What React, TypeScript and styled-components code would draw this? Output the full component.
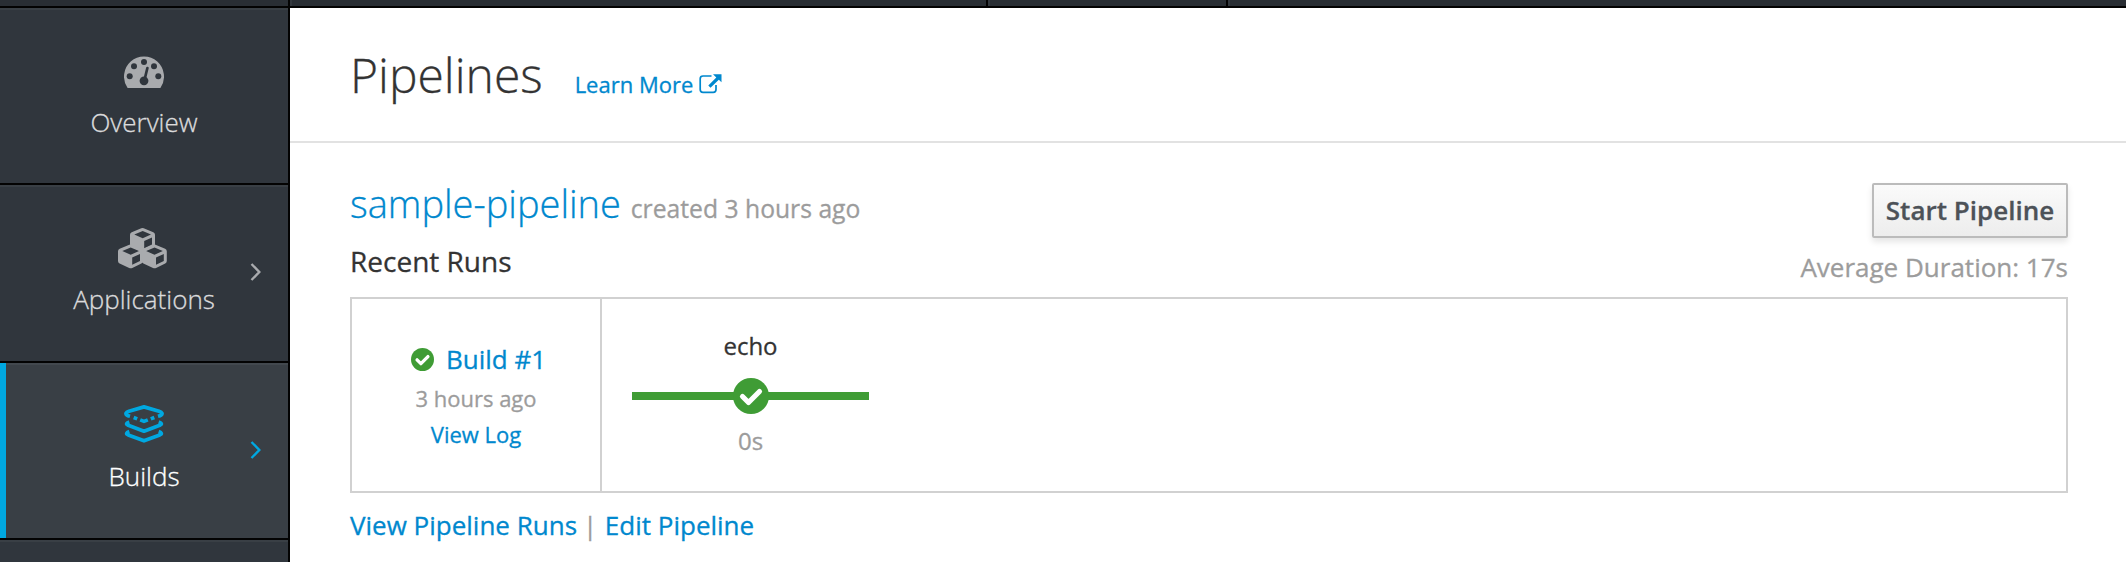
import React from "react";
import styled, { createGlobalStyle } from "styled-components";

const Global = createGlobalStyle`
  * { box-sizing: border-box; }
  body { margin: 0; background: #fff; overflow: hidden; font-family: "Open Sans", "Liberation Sans", sans-serif; color: #333; -webkit-text-stroke: 0.3px; }
  h1, h2, h3, p { margin: 0; font-weight: 400; }
  a { color: #0088ce; text-decoration: none; }
  svg { display: block; flex: none; }
`;

const Page = styled.div`
  height: 562px;
  display: flex;
  flex-direction: column;
  overflow: hidden;
`;

const TopBar = styled.header`
  height: 8px;
  flex: none;
  display: flex;
  background: #292e34;
  border-bottom: 2px solid #030303;
`;

const TopCell = styled.div<{ $w?: number }>`
  ${(p) => (p.$w ? `width: ${p.$w}px; flex: none;` : "flex: 1;")}
  border-right: ${(p) => (p.$w ? "2px solid #030303" : "0")};
  border-left: 2px solid #33383e;

  &:first-child {
    border-left: 0;
  }
`;

const Body = styled.div`
  flex: 1;
  display: flex;
  min-height: 0;
`;

const Sidebar = styled.nav`
  width: 290px;
  flex: none;
  border-right: 2px solid #030303;
  background: #30363d;
`;

const NavItem = styled.a<{ $active?: boolean; $h: number }>`
  height: ${(p) => p.$h}px;
  padding-bottom: 2px;
  display: grid;
  grid-template-columns: 64px 160px 64px;
  align-items: center;
  background: ${(p) => (p.$active ? "#393f45" : "#30363d")};
  border-bottom: 2px solid #030303;
  box-shadow: ${(p) => (p.$active ? "inset 6px 0 0 #00a8e1, " : "")}inset 0 2px 0 ${(p) => (p.$active ? "#42484e" : "#393f45")};
  color: ${(p) => (p.$active ? "#00a8e1" : "#a9abae")};
`;

const NavContent = styled.div<{ $pad: number }>`
  grid-column: 2;
  align-self: start;
  display: flex;
  flex-direction: column;
  align-items: center;
  padding-top: ${(p) => p.$pad}px;
`;

const NavIcon = styled.div`
  height: 44px;
  display: flex;
  align-items: center;
`;

const NavLabel = styled.span<{ $active?: boolean }>`
  margin-top: 8px;
  font-size: 26px;
  line-height: 40px;
  font-weight: 300;
  color: ${(p) => (p.$active ? "#fff" : "#dbdbdc")};
`;

const Arrow = styled.span`
  margin-left: 26px;
`;

const Main = styled.main`
  flex: 1;
  min-width: 0;
`;

const PageHeader = styled.div`
  height: 135px;
  padding: 34px 60px 0;
  display: flex;
  align-items: baseline;
  border-bottom: 2px solid #e2e2e2;
`;

const Title = styled.h1`
  font-size: 48px;
  line-height: 66px;
  font-weight: 300;
`;

const LearnMore = styled.a`
  margin-left: 32px;
  display: flex;
  align-items: center;
  gap: 6px;
  font-size: 22px;
  line-height: 30px;
`;

const Content = styled.section`
  padding: 40px 58px 0 60px;
`;

const Summary = styled.div`
  height: 114px;
  display: flex;
  justify-content: space-between;
`;

const Name = styled.h2`
  font-size: 38px;
  line-height: 40px;
  font-weight: 300;
`;

const Created = styled.small`
  font-size: 24.7px;
  line-height: 1;
  font-weight: 400;
  color: #9c9c9c;
`;

const SubTitle = styled.h3`
  margin-top: 18px;
  font-size: 28px;
  line-height: 40px;
`;

const Actions = styled.div`
  display: flex;
  flex-direction: column;
  align-items: flex-end;
`;

const StartButton = styled.button`
  width: 196px;
  height: 55px;
  padding: 0 0 1px;
  border: 2px solid #bbb;
  border-radius: 2px;
  background: linear-gradient(#fafafa, #ededed);
  box-shadow: 0 4px 6px rgba(3, 3, 3, 0.1);
  color: #4d5258;
  font: 600 26px/36px "Open Sans", "Liberation Sans", sans-serif;
`;

const Duration = styled.p`
  margin-top: 11px;
  font-size: 26px;
  line-height: 36px;
  color: #9c9c9c;
`;

const RunBox = styled.div`
  height: 196px;
  display: flex;
  border: 2px solid #d1d1d1;
`;

const BuildCell = styled.div`
  width: 250px;
  border-right: 2px solid #d1d1d1;
  padding-top: 40px;
  display: flex;
  flex-direction: column;
  align-items: center;
`;

const BuildName = styled.div`
  margin-bottom: 1px;
  padding-left: 5px;
  display: flex;
  align-items: center;
  gap: 12px;
  font-size: 26px;
  line-height: 40px;
`;

const BuildLine = styled.div`
  font-size: 22px;
  line-height: 36px;
  color: #9c9c9c;
`;

const Stage = styled.div`
  margin-left: 30px;
  width: 237px;
  padding-top: 29px;
  display: flex;
  flex-direction: column;
  align-items: center;
  font-size: 24px;
  line-height: 35px;
`;

const StageTrack = styled.div`
  width: 100%;
  height: 36px;
  margin: 15px 0 9px;
  display: flex;
  align-items: center;
  justify-content: center;
  background: linear-gradient(#3f9c35, #3f9c35) center 14px / 100% 8px no-repeat;
`;

const StageTime = styled.div`
  color: #9c9c9c;
`;

const Links = styled.div`
  margin-top: 14px;
  font-size: 26px;
  line-height: 36px;
  color: #9c9c9c;
`;

const Divider = styled.span`
  margin: 0 7.5px 0 6px;
`;

const GaugeIcon = () => (
  <svg width="40" height="32" viewBox="0 0 40 32">
    <path fill="currentColor" d="M3.6 32A20 20 0 1 1 36.4 32Z" />
    <g fill="#30363d">
      <circle cx="5.7" cy="20.3" r="3" />
      <circle cx="10" cy="10.3" r="3" />
      <circle cx="20" cy="6" r="3" />
      <circle cx="30" cy="10.3" r="3" />
      <circle cx="34.3" cy="20.3" r="3" />
      <circle cx="20" cy="24.8" r="4.4" />
    </g>
    <path d="M20.6 23.5 23.4 12" stroke="#30363d" strokeWidth="2.7" strokeLinecap="round" />
  </svg>
);

const Cube = ({ x, y }: { x: number; y: number }) => (
  <g transform={`translate(${x} ${y})`}>
    <path
      fill="currentColor"
      fillRule="evenodd"
      d="M11.3.3Q12.5-.2 13.7.3L23.3 4.2Q25 5 25 6.8V16.4Q25 18 23.4 18.9L14.3 23.4Q12.8 24.1 11.2 23.4L1.6 18.9Q0 18 0 16.4V6.8Q0 5 1.7 4.2ZM4.3 6.6 12.7 10.2 21 6.6 12.7 3.1ZM14.2 13V20.2L22 16.4V9.6Z"
    />
  </g>
);

const CubesIcon = () => (
  <svg width="52" height="42" viewBox="0 0 52 42">
    <Cube x={12} y={0} />
    <Cube x={0} y={16.5} />
    <Cube x={23.8} y={16.5} />
  </svg>
);

const LayersIcon = () => (
  <svg width="40" height="42" viewBox="0 0 40 42" fill="none" stroke="currentColor" strokeWidth="3.7" strokeLinejoin="round">
    <path d="M6 11.300Q1.500 10 2 8.300Q2.500 7.200 5 6.300L20 1.900L35 6.300Q37.500 7.200 38 8.300Q38.500 10 34 11.300" />
    <path d="M9.700 12.500 13.200 13.900M16.200 14.900 20 16.400 23.800 14.900M26.800 13.900 30.300 12.500" />
    <path d="M5.300 17Q.600 18.700 4.200 20.300L20 26.200L35.800 20.300Q39.400 18.700 34.700 17" />
    <path d="M5.300 26.600Q.600 28.300 4.200 29.900L20 35.800L35.800 29.900Q39.400 28.300 34.700 26.600" />
  </svg>
);

const Chevron = () => (
  <svg width="12" height="18" viewBox="0 0 12 18" fill="none" stroke="currentColor" strokeWidth="2.4">
    <path d="M1.500 1 9.300 9 1.500 17" />
  </svg>
);

const ExternalIcon = () => (
  <svg width="23" height="20" viewBox="0 0 23 20">
    <path d="M12.500 2H4Q1.200 2 1.200 4.800V15.600Q1.200 18.400 4 18.400H14.200Q17 18.400 17 15.600V11" fill="none" stroke="currentColor" strokeWidth="1.700" />
    <path d="M14 .2H22.500V8.300L19.800 5.700 11.500 13.800 9.300 11.600 17.300 3.400Z" fill="currentColor" />
  </svg>
);

const CheckIcon = ({ size }: { size: number }) => (
  <svg width={size} height={size} viewBox="0 0 36 36">
    <circle cx="18" cy="18" r="18" fill="#3f9c35" />
    <path d="M9.500 18.500 15.500 24.500 26.500 13.500" fill="none" stroke="#fff" strokeWidth="5.200" strokeLinejoin="round" strokeLinecap="round" />
  </svg>
);

export default function App() {
  return (
    <Page>
      <Global />
      <TopBar>
        <TopCell $w={290} />
        <TopCell $w={698} />
        <TopCell $w={240} />
        <TopCell />
      </TopBar>
      <Body>
        <Sidebar>
          <NavItem $h={177}>
            <NavContent $pad={42}>
              <NavIcon><GaugeIcon /></NavIcon>
              <NavLabel>Overview</NavLabel>
            </NavContent>
          </NavItem>
          <NavItem $h={178}>
            <NavContent $pad={42}>
              <NavIcon><CubesIcon /></NavIcon>
              <NavLabel>Applications</NavLabel>
            </NavContent>
            <Arrow><Chevron /></Arrow>
          </NavItem>
          <NavItem $h={177} $active>
            <NavContent $pad={41}>
              <NavIcon><LayersIcon /></NavIcon>
              <NavLabel $active>Builds</NavLabel>
            </NavContent>
            <Arrow><Chevron /></Arrow>
          </NavItem>
          <NavItem $h={178} />
        </Sidebar>
        <Main>
          <PageHeader>
            <Title>Pipelines</Title>
            <LearnMore>Learn More<ExternalIcon /></LearnMore>
          </PageHeader>
          <Content>
            <Summary>
              <div>
                <Name><a>sample-pipeline</a> <Created>created 3 hours ago</Created></Name>
                <SubTitle>Recent Runs</SubTitle>
              </div>
              <Actions>
                <StartButton>Start Pipeline</StartButton>
                <Duration>Average Duration: 17s</Duration>
              </Actions>
            </Summary>
            <RunBox>
              <BuildCell>
                <BuildName><CheckIcon size={23} /><a>Build #1</a></BuildName>
                <BuildLine>3 hours ago</BuildLine>
                <BuildLine><a>View Log</a></BuildLine>
              </BuildCell>
              <Stage>
                <div>echo</div>
                <StageTrack><CheckIcon size={36} /></StageTrack>
                <StageTime>0s</StageTime>
              </Stage>
            </RunBox>
            <Links>
              <a>View Pipeline Runs</a><Divider>|</Divider><a>Edit Pipeline</a>
            </Links>
          </Content>
        </Main>
      </Body>
    </Page>
  );
}
